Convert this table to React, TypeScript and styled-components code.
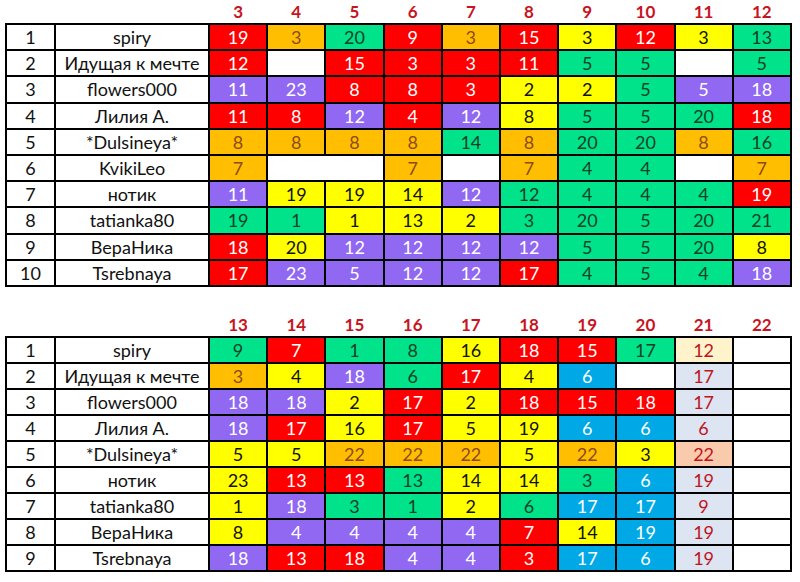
import React from "react";
import styled, { createGlobalStyle } from "styled-components";

const Global = createGlobalStyle`
  html, body { margin: 0; padding: 0; background: #ffffff; }
  body { font-family: "Lato", "Open Sans", "Liberation Sans", sans-serif; }
`;

type Tone = "R" | "O" | "G" | "Y" | "P" | "B" | "LY" | "LB" | "PE" | "W";

const palette: Record<Tone, { bg: string; fg: string }> = {
  R: { bg: "#fe0000", fg: "#ffffff" },
  O: { bg: "#ffbf00", fg: "#8e4a1c" },
  G: { bg: "#00e38a", fg: "#163f27" },
  Y: { bg: "#ffff00", fg: "#111111" },
  P: { bg: "#9068f2", fg: "#ffffff" },
  B: { bg: "#00a9e6", fg: "#ffffff" },
  LY: { bg: "#fff3cc", fg: "#c0141c" },
  LB: { bg: "#dce5f1", fg: "#c0141c" },
  PE: { bg: "#f9cbac", fg: "#c0141c" },
  W: { bg: "#ffffff", fg: "#000000" },
};

type Cell = { t: Tone; v?: string; span?: number };

type RowData = { n: number; name: string; cells: Cell[] };

const parse = (s: string): Cell[] =>
  s.split(" ").map((tok) => {
    const m = tok.match(/^([A-Z]+)(\d*)(?::(\d+))?$/)!;
    return { t: m[1] as Tone, v: m[2] || undefined, span: m[3] ? Number(m[3]) : undefined };
  });

const top: RowData[] = [
  { n: 1, name: "spiry", cells: parse("R19 O3 G20 R9 O3 R15 Y3 R12 Y3 G13") },
  { n: 2, name: "Идущая к мечте", cells: parse("R12 W R15 R3 R3 R11 G5 G5 W G5") },
  { n: 3, name: "flowers000", cells: parse("P11 P23 R8 R8 R3 Y2 Y2 G5 P5 P18") },
  { n: 4, name: "Лилия А.", cells: parse("R11 R8 P12 R4 P12 Y8 G5 G5 G20 R18") },
  { n: 5, name: "*Dulsineya*", cells: parse("O8 O8 O8 O8 G14 O8 G20 G20 O8 G16") },
  { n: 6, name: "KvikiLeo", cells: parse("O7 W:2 O7 W O7 G4 G4 W O7") },
  { n: 7, name: "нотик", cells: parse("P11 Y19 Y19 Y14 P12 G12 G4 G4 G4 R19") },
  { n: 8, name: "tatianka80", cells: parse("G19 G1 Y1 Y13 Y2 G3 G20 G5 G20 G21") },
  { n: 9, name: "ВераНика", cells: parse("R18 Y20 P12 P12 P12 P12 G5 G5 G20 Y8") },
  { n: 10, name: "Tsrebnaya", cells: parse("R17 P23 P5 P12 P12 R17 G4 G5 G4 P18") },
];

const bottom: RowData[] = [
  { n: 1, name: "spiry", cells: parse("G9 R7 G1 G8 Y16 R18 R15 G17 LY12 W") },
  { n: 2, name: "Идущая к мечте", cells: parse("O3 Y4 P18 G6 R17 Y4 B6 W LB17 W") },
  { n: 3, name: "flowers000", cells: parse("P18 P18 Y2 R17 Y2 R18 R15 R18 LB17 W") },
  { n: 4, name: "Лилия А.", cells: parse("P18 R17 Y16 R17 Y5 Y19 B6 B6 LB6 W") },
  { n: 5, name: "*Dulsineya*", cells: parse("Y5 Y5 O22 O22 O22 Y5 O22 Y3 PE22 W") },
  { n: 6, name: "нотик", cells: parse("Y23 R13 R13 G13 Y14 Y14 G3 B6 LB19 W") },
  { n: 7, name: "tatianka80", cells: parse("Y1 P18 G3 G1 Y2 G6 B17 B17 LB9 W") },
  { n: 8, name: "ВераНика", cells: parse("Y8 P4 P4 P4 P4 R7 Y14 B19 LB19 W") },
  { n: 9, name: "Tsrebnaya", cells: parse("P18 R13 R18 P4 P4 R3 B17 B6 LB19 W") },
];

const Page = styled.div`
  display: flex;
  flex-direction: column;
  gap: 26px;
  padding: 0 0 0 5px;
`;

const Table = styled.table`
  border-collapse: collapse;
  table-layout: fixed;
  width: 785px;
`;

const HeadCell = styled.th`
  height: 23px;
  padding: 0;
  border: none;
  color: #c8141e;
  font-weight: 700;
  font-size: 17px;
  text-align: center;
  vertical-align: middle;
`;

const Row = styled.tr<{ $h: number }>`
  height: ${(p) => p.$h}px;
`;

const TextCell = styled.td`
  padding: 0;
  border: 2px solid #000;
  text-align: center;
  vertical-align: middle;
  font-size: 18px;
  color: #111;
  background: #fff;
  white-space: nowrap;
  line-height: 22px;
`;

const ScoreCell = styled.td<{ $tone: Tone }>`
  padding: 0;
  border: 2px solid #000;
  text-align: center;
  vertical-align: middle;
  font-size: 18px;
  line-height: 22px;
  background: ${(p) => palette[p.$tone].bg};
  color: ${(p) => palette[p.$tone].fg};
`;

function Board({ first, rows, rowH }: { first: number; rows: RowData[]; rowH: number }) {
  const heads = Array.from({ length: 10 }, (_, i) => first + i);
  return (
    <Table>
      <colgroup>
        <col style={{ width: 49 }} />
        <col style={{ width: 154 }} />
        {heads.map((h) => (
          <col key={h} style={{ width: 58.2 }} />
        ))}
      </colgroup>
      <thead>
        <tr>
          <HeadCell />
          <HeadCell />
          {heads.map((h) => (
            <HeadCell key={h}>{h}</HeadCell>
          ))}
        </tr>
      </thead>
      <tbody>
        {rows.map((r) => (
          <Row key={r.n} $h={rowH}>
            <TextCell>{r.n}</TextCell>
            <TextCell>{r.name}</TextCell>
            {r.cells.map((c, i) => (
              <ScoreCell key={i} $tone={c.t} colSpan={c.span}>
                {c.v}
              </ScoreCell>
            ))}
          </Row>
        ))}
      </tbody>
    </Table>
  );
}

export default function App() {
  return (
    <>
      <Global />
      <Page>
        <Board first={3} rows={top} rowH={26.2} />
        <Board first={13} rows={bottom} rowH={26} />
      </Page>
    </>
  );
}
